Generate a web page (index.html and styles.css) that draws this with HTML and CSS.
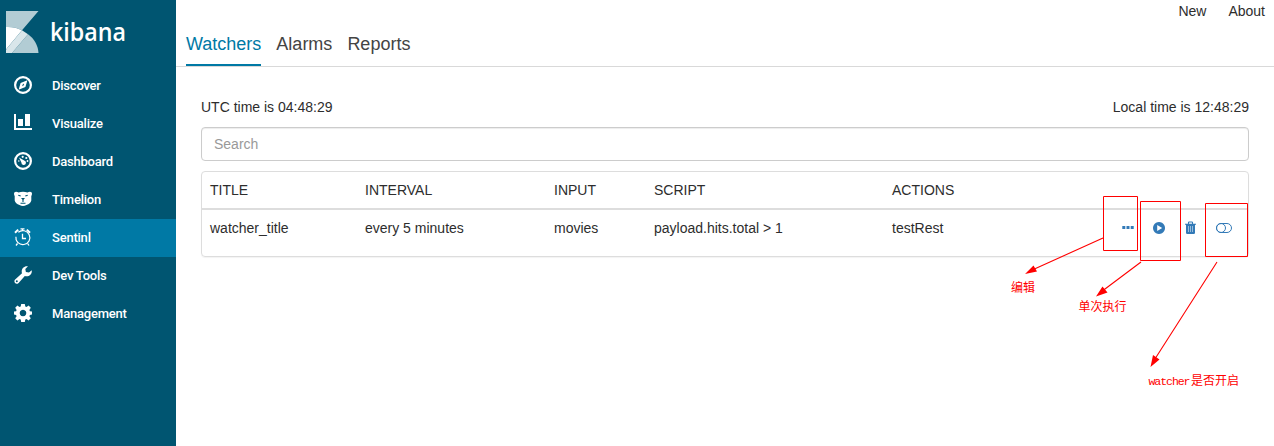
FILE: index.html
```html
<!DOCTYPE html>
<html lang="en">
<head>
<meta charset="utf-8">
<title>Kibana</title>
<link rel="stylesheet" href="styles.css">
</head>
<body>
<div class="app">
  <nav class="sidebar">
    <div class="brand">
      <svg class="brand-logo" width="33" height="42" viewBox="0 0 33 42">
        <path d="M0 0H32.500L16 19.300Q9 15.500 0 16z" fill="#b2ccd4"/>
        <path d="M22 23.300C28 27.500 32 34 32.500 42H6z" fill="#b2ccd4"/>
        <path d="M0 16Q9 15.500 16 19.300L0 38.500z" fill="#fff"/>
        <path d="M16 19.300L22 23.300L6 42H0V38.500z" fill="#d9e6ea"/>
      </svg>
      <svg class="brand-name" width="90" height="38"><text x="0" y="26" textLength="76" lengthAdjust="spacingAndGlyphs">kibana</text></svg>
    </div>
    <a class="item"><svg class="icon" viewBox="0 0 18 18"><circle cx="9" cy="9" r="7.900" fill="none" stroke="#fff" stroke-width="2.200"/><path fill-rule="evenodd" d="M13.400 4.200L11.400 11.100L4.600 13.800L6.600 6.900zM9.200 7.400L8 10.200L10.200 9z" fill="#fff"/></svg><span>Discover</span></a>
    <a class="item"><svg class="icon" viewBox="0 0 18 18"><path d="M0 0h2v14h16v2H0zM4 5h5v7H4zM11 0h5v12h-5z" fill="#fff"/></svg><span>Visualize</span></a>
    <a class="item"><svg class="icon" viewBox="0 0 18 18"><circle cx="9" cy="9" r="7.900" fill="none" stroke="#fff" stroke-width="2.200"/><path d="M5 5.500l5.200 2.900a2.300 2.300 0 1 1-2.800 2.100z" fill="#fff"/><circle cx="8.700" cy="4.800" r="1.100" fill="#fff"/><circle cx="12.300" cy="6" r="1.100" fill="#fff"/><circle cx="13.500" cy="9" r=".9" fill="#fff"/><circle cx="4.800" cy="9" r=".8" fill="#fff"/></svg><span>Dashboard</span></a>
    <a class="item"><svg class="icon" viewBox="0 0 18 18"><path d="M0 3.500Q0 1.800 2 1.800Q3.500 1.800 4.500 2.500Q9 1.200 13.500 2.500Q14.500 1.800 16 1.800Q18 1.800 18 3.500Q18 5 17.300 6V10.500Q16.500 13.500 12.500 15Q9 17 5.500 15Q1.500 13.500.7 10.500V6Q0 5 0 3.500z" fill="#fff"/><path d="M4.300 5.200l2.400.8M13.700 5.200l-2.400.8M6.500 13.200h5M9 9.500v2.500" fill="none" stroke="#005571" stroke-width="1.100"/><path d="M7 7.900h4L9 10.300z" fill="#005571"/></svg><span>Timelion</span></a>
    <a class="item active"><svg class="icon" viewBox="0 0 18 18"><path d="M4.300 4.300A7 7 0 1 1 1.900 8.800M1.900 11A7 7 0 0 0 4 14.700" fill="none" stroke="#fff" stroke-width="1.200"/><path d="M8.500 5.800V10.500H12M8.500 1v2M6.500 .8h4M3.500 15.500L2 17.500M13.600 15.500l1.400 2" fill="none" stroke="#fff" stroke-width="1.300"/><path d="M1 4.700L4.200 1.600M12.800 1.600L16 4.700" stroke="#fff" stroke-width="2"/></svg><span>Sentinl</span></a>
    <a class="item"><svg class="icon" viewBox="0 0 18 18"><path fill-rule="evenodd" d="M17.700 4.200C18.500 8.500 14.700 11.300 10.800 10L4.600 16.900C2.200 19.200-.8 16.400.9 13.700L8 7.200C6.700 3.300 9.800-.5 14 .3L11.300 3l.6 3 3.100.6zM3.800 15.300a1 1 0 1 0-2 0a1 1 0 1 0 2 0z" fill="#fff"/></svg><span>Dev Tools</span></a>
    <a class="item"><svg class="icon" viewBox="0 0 18 18"><path fill-rule="evenodd" d="M7.200 0h3.600l.5 2.500 1.200.5 2.100-1.400 2.200 2.200L15.400 6l.5 1.200 2.100.4v3l-2.100.4-.5 1.200 1.400 2.100-2.200 2.200-2.100-1.400-1.200.5-.5 2.400H7.200l-.5-2.400-1.200-.5-2.100 1.400-2.200-2.200L2.600 12.200 2.100 11 0 10.600v-3l2.100-.4L2.600 6 1.200 3.800l2.200-2.200L5.500 3l1.200-.5zM9 5.700a3.300 3.300 0 1 0 .01 0z" fill="#fff"/></svg><span>Management</span></a>
  </nav>
  <main class="content">
    <div class="topbar"><a>New</a><a>About</a></div>
    <div class="tabs"><a class="tab selected">Watchers</a><a class="tab">Alarms</a><a class="tab">Reports</a></div>
    <section class="panel">
      <div class="times"><span>UTC time is 04:48:29</span><span>Local time is 12:48:29</span></div>
      <input class="search" type="text" placeholder="Search">
      <div class="table">
        <div class="row head"><span>TITLE</span><span>INTERVAL</span><span>INPUT</span><span>SCRIPT</span><span>ACTIONS</span></div>
        <div class="row"><span>watcher_title</span><span>every 5 minutes</span><span>movies</span><span>payload.hits.total &gt; 1</span><span>testRest</span>
          <div class="controls">
            <svg width="12" height="14" viewBox="0 0 12 14"><path d="M.3 5h3v3h-3zM4.500 5h3v3h-3zM8.700 5h3v3h-3z" fill="#337ab7"/></svg>
            <svg width="12" height="14" viewBox="0 0 12 14"><path fill-rule="evenodd" d="M6 1a6 6 0 1 0 .01 0zM4.200 4v6l5-3z" fill="#337ab7"/></svg>
            <svg width="11" height="14" viewBox="0 0 11 14"><path d="M3.500 2.700V1.600q0-.6.600-.6h2.800q.6 0 .6.600v1.100M0 3.200h11" fill="none" stroke="#337ab7" stroke-width="1.100"/><path d="M1 3h9v8.700Q10 13 8.800 13H2.200Q1 13 1 11.700z" fill="#337ab7"/><path d="M3.500 5v6M5.500 5v6M7.500 5v6" stroke="#a4c4df" stroke-width=".9"/></svg>
            <svg width="16" height="14" viewBox="0 0 16 14"><rect x=".5" y="2.500" width="15" height="9" rx="4.500" fill="none" stroke="#337ab7"/><circle cx="5" cy="7" r="4.500" fill="none" stroke="#337ab7"/></svg>
          </div>
        </div>
      </div>
    </section>
  </main>
  <svg class="annotations" width="1274" height="446" viewBox="0 0 1274 446">
    <g fill="none" stroke="#f00"><path d="M1103.500 196.500h34v54h-34zM1140.500 201.500h40v59h-40zM1205.500 203.500h42v53h-42z"/><path d="M1103 238L1030 271M1141 262L1101 292M1217 262L1153 362" stroke-width="1.100"/></g>
    <path d="M1025 274L1033.500 265.500L1037 271.500zM1096 296.500L1102.500 286.500L1107.500 292.500zM1150.500 367L1153 355L1159.500 359.500z" fill="#f00"/>
    <g class="notes"><text x="1011" y="291.500">编辑</text><text x="1078.500" y="310.500">单次执行</text><text x="1148.500" y="385"><tspan class="latin" textLength="42">watcher</tspan><tspan x="1191">是否开启</tspan></text></g>
  </svg>
</div>
</body>
</html>
```

FILE: styles.css
```css
* { box-sizing: border-box; }
body { margin: 0; font: 14px/20px "Liberation Sans", Arial, sans-serif; color: #2d2d2d; background: #fff; }
.app { position: relative; display: flex; width: 1274px; height: 446px; overflow: hidden; }
.sidebar { width: 176px; flex: none; background: #005571; color: #fff; }
.brand { display: flex; height: 67px; padding: 11px 0 0 6px; }
.brand-logo { flex: none; margin-right: 11px; }
.brand-name { margin-top: 4px; overflow: visible; font: 600 25px/30px "Open Sans", sans-serif; fill: #fff; }
.item { display: flex; align-items: center; height: 38px; padding-left: 14px; gap: 20px; font: 500 13px/38px Roboto, sans-serif; letter-spacing: -.22px; }
.item.active { background: #0079a5; }
.icon { width: 18px; height: 18px; margin-bottom: 2px; }
.content { flex: 1; min-width: 0; }
.topbar { display: flex; justify-content: flex-end; gap: 22px; height: 31px; padding: 1px 9px 0 0; }
.tabs { display: flex; gap: 15px; height: 36px; padding-left: 10px; border-bottom: 1px solid #d9d9d9; }
.tab { height: 35px; font-size: 18px; line-height: 26px; color: #444; }
.tab.selected { color: #0079a5; border-bottom: 2px solid #0079a5; }
.panel { padding: 30px 25px 0; }
.times { display: flex; justify-content: space-between; height: 30px; }
.search { display: block; width: 100%; height: 34px; padding: 6px 12px; border: 1px solid #ccc; border-radius: 4px; font: inherit; box-shadow: inset 0 1px 1px rgba(0,0,0,.075); }
.search::placeholder { color: #999; }
.table { height: 86px; margin-top: 10px; border: 1px solid #ddd; border-radius: 4px; box-shadow: 0 1px 1px rgba(0,0,0,.05); }
.row { display: grid; grid-template-columns: 155px 189px 100px 238px 228px 1fr; padding: 8px 0 0 8px; }
.row.head { height: 38px; border-bottom: 2px solid #ddd; }
.controls { display: flex; align-items: center; padding-left: 2px; }
.controls svg:nth-child(2) { margin-left: 19px; }
.controls svg:nth-child(3) { margin-left: 20px; }
.controls svg:nth-child(4) { margin-left: 20px; }
.annotations { position: absolute; left: 0; top: 0; pointer-events: none; }
.notes { font: 12px "Noto Sans CJK SC", sans-serif; fill: #f00; }
.latin { font-family: "Liberation Mono", monospace; font-size: 11.500px; }
```
